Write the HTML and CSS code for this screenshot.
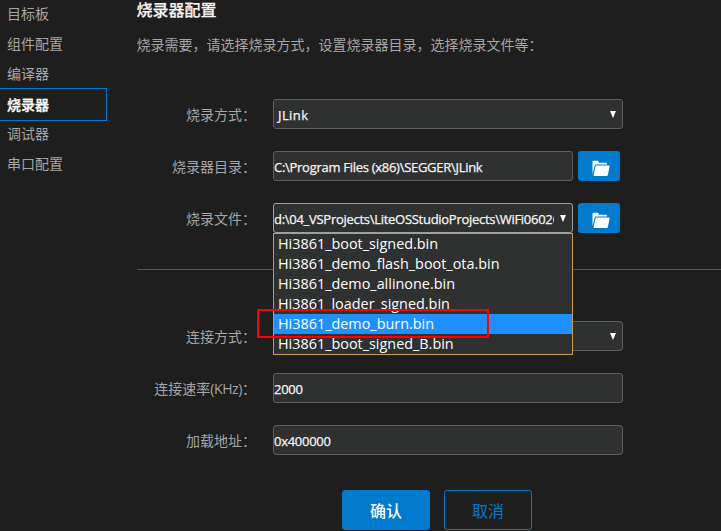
FILE: index.html
```html
<!DOCTYPE html>
<html lang="zh-CN">
<head>
<meta charset="utf-8">
<title>烧录器配置</title>
<link rel="stylesheet" href="styles.css">
</head>
<body>
<svg width="0" height="0" class="defs"><symbol id="folder" viewBox="0 0 18 17"><path d="M0.5 14V1.7Q.5.8 1.4.8H5.7Q6.6.8 6.7 1.7V2.7H14Q15 2.7 15 3.7V4.5H4.2Q3 4.5 2.7 5.5L1.2 11.5Z"/><path d="M4.7 5.5H16.9Q17.8 5.5 17.6 6.4L15.9 14.8Q15.7 16 14.6 16H2.2Q1.3 16 1.5 15L3.5 6.4Q3.7 5.5 4.7 5.5Z"/></symbol></svg>
<div class="page">
  <nav class="sidebar">
    <a class="item">目标板</a>
    <a class="item">组件配置</a>
    <a class="item">编译器</a>
    <a class="item active">烧录器</a>
    <a class="item">调试器</a>
    <a class="item">串口配置</a>
  </nav>
  <main class="content">
    <h1>烧录器配置</h1>
    <p class="intro">烧录需要，请选择烧录方式，设置烧录器目录，选择烧录文件等：</p>
    <section class="group">
      <div class="row"><label>烧录方式：</label><div class="field select"><span class="value">JLink</span><i class="arrow"></i></div></div>
      <div class="row"><label>烧录器目录：</label><div class="field short"><span class="value path">C:\Program Files (x86)\SEGGER\JLink</span></div><button class="browse"><svg><use href="#folder"/></svg></button></div>
      <div class="row"><label>烧录文件：</label><div class="field short open"><span class="value file">d:\04_VSProjects\LiteOSStudioProjects\WiFi0602C</span><i class="arrow"></i>
        <ul class="menu">
          <li>Hi3861_boot_signed.bin</li>
          <li>Hi3861_demo_flash_boot_ota.bin</li>
          <li>Hi3861_demo_allinone.bin</li>
          <li>Hi3861_loader_signed.bin</li>
          <li class="selected">Hi3861_demo_burn.bin</li>
          <li>Hi3861_boot_signed_B.bin</li>
        </ul><div class="marker"></div></div><button class="browse"><svg><use href="#folder"/></svg></button></div>
    </section>
    <hr>
    <section class="group">
      <div class="row"><label>连接方式：</label><div class="field select"><i class="arrow"></i></div></div>
      <div class="row"><label>连接速率<span class="unit">(KHz)</span>：</label><div class="field"><span class="value">2000</span></div></div>
      <div class="row"><label>加载地址：</label><div class="field"><span class="value">0x400000</span></div></div>
    </section>
    <div class="actions"><button class="ok">确认</button><button class="cancel">取消</button></div>
  </main>
</div>
</body>
</html>
```
FILE: styles.css
```css
* { box-sizing: border-box; }
body { margin: 0; background: #1e1e1e; color: #a5a5a5; font: 14px/20px "Open Sans", "Noto Sans CJK SC", sans-serif; overflow: hidden; }
.defs { display: block; }
.page { display: flex; height: 531px; overflow: hidden; }
.sidebar { width: 107px; flex: none; margin-top: -1px; }
.item { display: block; height: 30px; line-height: 30px; padding-left: 7px; }
.item.active { height: 33px; line-height: 32px; margin: -1px 0 -2px; border: 1px solid #007acc; border-left: 0; color: #fff; font-weight: 500; -webkit-text-stroke: 0.3px; }
.content { flex: 1; padding-left: 29.5px; }
h1 { margin: 0; font-size: 16px; line-height: 21px; color: #f4f4f4; font-weight: 500; -webkit-text-stroke: 0.25px; }
.intro { margin: 14px 0 0; }
.group { display: flex; flex-direction: column; gap: 22px; }
.intro + .group { margin-top: 44px; }
.row { display: flex; height: 30px; }
label { width: 119.5px; margin-right: 17px; line-height: 32px; text-align: right; white-space: nowrap; }
.unit { letter-spacing: -0.4px; }
.field { position: relative; display: flex; align-items: center; width: 350px; height: 30px; background: #2f3131; border: 1px solid #5f5d5e; border-radius: 3px; color: #f5f5f5; font-size: 13px; }
.field.short { width: 300px; }
.field.open { border-color: #a0a0a0; }
.select { padding-left: 4px; }
.value { white-space: nowrap; padding-top: 2px; letter-spacing: -0.28px; -webkit-text-stroke: 0.25px; }
.select .value { letter-spacing: 0.4px; }
.file { width: 280px; overflow: hidden; }
.arrow { position: absolute; right: 6px; top: 11px; width: 6px; height: 7px; background: #fff; clip-path: polygon(0 0, 100% 0, 50% 100%); }
.browse { width: 42px; height: 30px; margin-left: 5px; padding: 4px 0 0 3px; border: 0; border-radius: 3px; background: #007acc; display: flex; align-items: center; justify-content: center; }
.browse svg { width: 18px; height: 17px; fill: #fff; }
.menu { position: absolute; z-index: 2; left: -1px; top: 29px; width: 300px; height: 122px; margin: 0; padding: 0; list-style: none; background: #2f3131; border: 1px solid #c79b4b; font-size: 14.4px; line-height: 20px; }
.menu li { height: 20px; padding-left: 4px; white-space: nowrap; color: #fff; }
.menu .selected { background: #1e90ff; }
.marker { position: absolute; z-index: 3; left: -17px; top: 105px; width: 232px; height: 29px; border: 2px solid #f00; }
hr { margin: 36px 0 51px; border: 0; height: 1px; background: #535353; }
.actions { display: flex; gap: 14px; margin: 35px 0 0 205.5px; }
.actions button { width: 88px; height: 40px; padding: 0; border: 1px solid #007acc; border-radius: 3px; font: 500 16px/38px "Noto Sans CJK SC", sans-serif; }
.ok { background: #007acc; color: #fff; }
.actions .cancel { background: transparent; color: #007acc; font-weight: 400; }
```
